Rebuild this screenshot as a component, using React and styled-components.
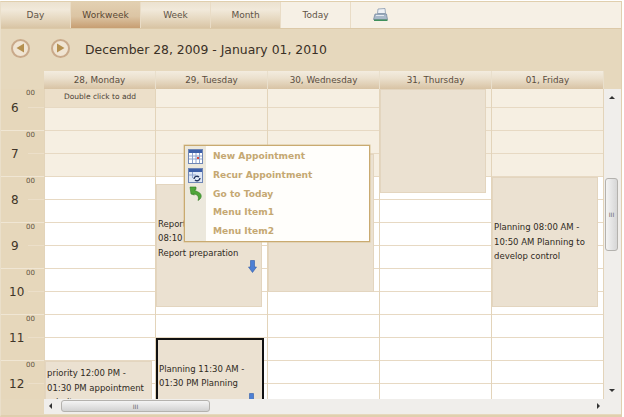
import React from "react";
import styled, { createGlobalStyle } from "styled-components";

const days = ["28, Monday", "29, Tuesday", "30, Wednesday", "31, Thursday", "01, Friday"];
const hours = [6, 7, 8, 9, 10, 11, 12];
const slots = Array.from({ length: 17 }, (_, i) => i);
const font = `"DejaVu Sans", Verdana, sans-serif`;

const GlobalStyle = createGlobalStyle`
  html, body {
    margin: 0;
    background: #fff;
    overflow: hidden;
  }
`;

const Frame = styled.div`
  box-sizing: border-box;
  width: 622px;
  height: 416px;
  margin-top: 1px;
  display: flex;
  flex-direction: column;
  background: #e6d8bd;
  border: 1px solid #e0cfae;
  border-left: 1px solid #eadfca;
  border-bottom-width: 2px;
  font-family: ${font};
  color: #3c3327;
  overflow: hidden;
`;

const Toolbar = styled.div`
  display: flex;
  height: 26px;
  flex: none;
  background: #f6f0e5;
  border-bottom: 1px solid #dcc9a8;
`;

const Tab = styled.div`
  box-sizing: border-box;
  width: 70px;
  display: flex;
  align-items: center;
  justify-content: center;
  font-size: 9px;
  color: ${(p) => (p.$active ? "#5a4632" : "#5f5346")};
  border-right: 1px solid #e9dcc6;
  background: ${(p) =>
    p.$active
      ? "linear-gradient(#e3d0b2 0%, #dcc5a4 55%, #c79e72 100%)"
      : p.$plain
      ? "#f6f0e5"
      : "linear-gradient(#ece2d0 0%, #f1e9da 30%, #e6d8c0 65%, #d8c4a4 100%)"};
`;

const PrintSlot = styled.div`
  width: 29px;
  margin-left: 22px;
  display: flex;
  align-items: center;
`;

const NavBar = styled.div`
  height: 42px;
  flex: none;
  display: flex;
  align-items: center;
  padding-left: 10px;
`;

const NavButton = styled.div`
  box-sizing: border-box;
  width: 19px;
  height: 19px;
  margin-right: ${(p) => p.$gap}px;
  margin-bottom: 4px;
  border-radius: 50%;
  border: 2px solid #c9a98a;
  background: #f0e4d2;
  display: flex;
  align-items: center;
  justify-content: center;
`;

const Title = styled.div`
  font-size: 12.4px;
  padding-bottom: 2px;
  color: #3a3026;
  white-space: nowrap;
`;

const HeaderRow = styled.div`
  display: flex;
  height: 18px;
  flex: none;
  padding-left: 43px;
`;

const DayHead = styled.div`
  box-sizing: border-box;
  width: 112px;
  display: flex;
  align-items: center;
  justify-content: center;
  font-size: 8.8px;
  color: #5a4d3e;
  border-right: 1px solid #e9dfcc;
  background: linear-gradient(#f3ecdf 0%, #ebe0cd 40%, #d8c3a4 100%);
`;

const Main = styled.div`
  position: relative;
  display: flex;
  height: 310px;
  flex: none;
  overflow: hidden;
`;

const Gutter = styled.div`
  width: 43px;
  flex: none;
  display: flex;
  flex-direction: column;
`;

const HourBlock = styled.div`
  box-sizing: border-box;
  position: relative;
  height: ${(p) => (p.$first ? 42 : 46)}px;
  flex: none;
  padding: ${(p) => (p.$first ? 12 : 16)}px 0 0 ${(p) => (p.$wide ? 8 : 10)}px;
  font-size: 12px;
  color: #3f3528;
  background: #e6d7bb;
  border-bottom: 1px solid #f0e6d4;

  &::after {
    content: "";
    position: absolute;
    right: 0;
    bottom: 22px;
    width: 16px;
    height: 1px;
    background: #ecdfc9;
  }
`;

const Minutes = styled.span`
  position: absolute;
  top: 0;
  right: 9px;
  font-size: 7px;
  color: #5f5240;
`;

const DayColumn = styled.div`
  position: relative;
  box-sizing: border-box;
  width: 112px;
  flex: none;
  border-right: 1px solid #e3d4ba;
  border-left: ${(p) => (p.$first ? "1px solid #e3d4ba" : "0")};
`;

const Slot = styled.div`
  box-sizing: border-box;
  height: ${(p) => (p.$first ? 19 : 23)}px;
  border-bottom: 1px solid #e7d9c3;
  background: ${(p) => (p.$hint ? "#ecdfc9" : p.$off ? "#f6efe2" : "#fff")};
  font-size: 7.5px;
  text-align: center;
  line-height: 15px;
  color: #4b4034;
`;

const EventBox = styled.div`
  box-sizing: border-box;
  position: absolute;
  left: 0;
  top: ${(p) => p.$top}px;
  width: ${(p) => p.$width || 106}px;
  height: ${(p) => p.$height}px;
  padding: 0 0 ${(p) => p.$lift || 0}px 1px;
  display: flex;
  align-items: center;
  background: #ebe1d1;
  border: ${(p) => (p.$selected ? "2px solid #111" : "1px solid #e3d5bf")};
  font-size: 8.5px;
  line-height: 14.5px;
  color: #2f2a22;
`;

const ArrowSlot = styled.div`
  position: absolute;
  right: ${(p) => p.$right}px;
  top: ${(p) => p.$top}px;
  line-height: 0;
`;

const VScroll = styled.div`
  position: relative;
  width: 17px;
  flex: none;
  background: #f0eeeb;
`;

const ScrollArrow = styled.div`
  position: absolute;
  width: 0;
  height: 0;
  left: ${(p) => p.$left}px;
  top: ${(p) => p.$top}px;
  border: 3px solid transparent;
  ${(p) => p.$dir === "up" && "border-top: 0; border-bottom: 3px solid #333;"}
  ${(p) => p.$dir === "down" && "border-bottom: 0; border-top: 3px solid #333;"}
  ${(p) => p.$dir === "left" && "border-left: 0; border-right: 3px solid #333;"}
  ${(p) => p.$dir === "right" && "border-right: 0; border-left: 3px solid #333;"}
`;

const VThumb = styled.div`
  position: absolute;
  left: 1px;
  top: 89px;
  box-sizing: border-box;
  width: 13px;
  height: 73px;
  border: 1px solid #b4b2ae;
  border-radius: 3px;
  background: linear-gradient(90deg, #f4f4f4, #d6d6d6);
  display: flex;
  align-items: center;
  justify-content: center;
  font-size: 6px;
  color: #666;
`;

const HScrollRow = styled.div`
  display: flex;
  height: 16px;
  flex: none;
  padding-left: 43px;
`;

const HTrack = styled.div`
  position: relative;
  flex: 1;
  height: 15px;
  background: #f0eeeb;
`;

const HThumb = styled.div`
  position: absolute;
  left: 17px;
  top: 1px;
  box-sizing: border-box;
  width: 149px;
  height: 12px;
  border: 1px solid #b4b2ae;
  border-radius: 3px;
  background: linear-gradient(#f4f4f4, #d2d2d2);
  display: flex;
  align-items: center;
  justify-content: center;
  font-size: 6px;
  color: #666;
`;

const Menu = styled.div`
  position: absolute;
  left: 183px;
  top: 56px;
  z-index: 5;
  box-sizing: border-box;
  width: 186px;
  height: 97px;
  display: flex;
  flex-direction: column;
  padding-top: 1px;
  background: linear-gradient(90deg, #ece8dc 21px, #fffefb 21px);
  border: 1px solid #c9aa70;
  box-shadow: 0 0 0 0.5px #d9c296;
`;

const MenuItem = styled.div`
  height: 18.7px;
  display: flex;
  align-items: center;
  font-size: 9.1px;
  font-weight: 700;
  color: #c5a872;
`;

const MenuIcon = styled.div`
  width: 21px;
  margin-right: 7px;
  flex: none;
  display: flex;
  justify-content: center;
  line-height: 0;
`;

const CalendarIcon = () => (
  <svg width="15" height="15" viewBox="0 0 15 15">
    <rect x="0.5" y="0.5" width="14" height="14" fill="#fff" stroke="#6f86b5" />
    <rect x="1" y="1" width="13" height="3" fill="#3d5fa8" />
    <path d="M1 7h13M1 10h13M4.500 4v10M8 4v10M11.500 4v10" stroke="#8ea3cc" />
    <rect x="9" y="8" width="2" height="2" fill="#d8453c" />
  </svg>
);

const RecurIcon = () => (
  <svg width="15" height="15" viewBox="0 0 15 15">
    <rect x="0.5" y="0.5" width="14" height="14" fill="#dfe7f5" stroke="#6f86b5" />
    <rect x="1" y="1" width="13" height="3" fill="#3d5fa8" />
    <path d="M1 7h7M4.500 4v6" stroke="#8ea3cc" />
    <path d="M6 11a3 3 0 0 1 5-2M12 10a3 3 0 0 1-5 2" fill="none" stroke="#24365f" strokeWidth="1.4" />
  </svg>
);

const TodayIcon = () => (
  <svg width="14" height="15" viewBox="0 0 14 15">
    <path d="M1 1h6v2.500L5 4l5 2.500c2.500 1.500 3 4.500 1 6.500l-2 1.500C10 12 9.500 9.500 7 8.500L4 7.500 5.500 9 2 8z" fill="#4fa63a" stroke="#2f7a22" strokeWidth="0.6" />
  </svg>
);

const PrinterIcon = () => (
  <svg width="15" height="14" viewBox="0 0 15 14">
    <path d="M5 1l7-0.500 0.500 5h-8z" fill="#eef1f5" stroke="#7b8ea6" strokeWidth="0.7" />
    <path d="M2 6h11.500l1 5.500H0.500z" fill="#a9b8c9" stroke="#71849b" strokeWidth="0.7" />
    <path d="M1 11.500h13.500V13H1z" fill="#3f8f5b" />
    <path d="M3 7.500h8" stroke="#e4eaf0" />
  </svg>
);

const DownArrow = () => (
  <svg width="9" height="13" viewBox="0 0 9 13">
    <path d="M2.500 0.500h4v6.500h2L4.500 12.500 0.500 7h2z" fill="#4d7fd4" stroke="#2f5aa8" strokeWidth="0.6" />
  </svg>
);

const NavTriangle = ({ left }) => (
  <svg width="9" height="10" viewBox="0 0 9 10">
    <path d={left ? "M8 0.500v9L0.500 5z" : "M1 0.500v9L8.500 5z"} fill="#b5904f" />
  </svg>
);

export default function App() {
  return (
    <>
      <GlobalStyle />
      <Frame>
        <Toolbar>
          <Tab>Day</Tab>
          <Tab $active>Workweek</Tab>
          <Tab>Week</Tab>
          <Tab>Month</Tab>
          <Tab $plain>Today</Tab>
          <PrintSlot>
            <PrinterIcon />
          </PrintSlot>
        </Toolbar>
        <NavBar>
          <NavButton $gap={21}>
            <NavTriangle left />
          </NavButton>
          <NavButton $gap={15}>
            <NavTriangle />
          </NavButton>
          <Title>December 28, 2009 - January 01, 2010</Title>
        </NavBar>
        <HeaderRow>
          {days.map((d) => (
            <DayHead key={d}>{d}</DayHead>
          ))}
        </HeaderRow>
        <Main>
          <Gutter>
            {hours.map((h, i) => (
              <HourBlock key={h} $first={i === 0} $wide={h > 9}>
                <Minutes>00</Minutes>
                {h}
              </HourBlock>
            ))}
          </Gutter>
          {days.map((d, c) => (
            <DayColumn key={d} $first={c === 0}>
              {slots.map((s) => (
                <Slot key={s} $first={s === 0} $off={s < 4} $hint={c === 0 && s === 0}>
                  {c === 0 && s === 0 ? "Double click to add" : ""}
                </Slot>
              ))}
              {c === 0 && (
                <EventBox $top={272} $height={54} $width={107}>
                  priority 12:00 PM - 01:30 PM appointment priority
                </EventBox>
              )}
              {c === 1 && (
                <>
                  <EventBox $top={95} $height={123} $lift={14}>
                    Report preparation 08:10 AM - 10:50 AM Report preparation
                    <ArrowSlot $top={75} $right={4}>
                      <DownArrow />
                    </ArrowSlot>
                  </EventBox>
                  <EventBox $top={249} $height={76} $width={108} $selected>
                    Planning 11:30 AM - 01:30 PM Planning
                    <ArrowSlot $top={53} $right={6}>
                      <DownArrow />
                    </ArrowSlot>
                  </EventBox>
                </>
              )}
              {c === 2 && <EventBox $top={65} $height={138} />}
              {c === 3 && <EventBox $top={0} $height={104} />}
              {c === 4 && (
                <EventBox $top={88} $height={130}>
                  Planning 08:00 AM - 10:50 AM Planning to develop control
                </EventBox>
              )}
            </DayColumn>
          ))}
          <VScroll>
            <ScrollArrow $dir="up" $left={5} $top={7} />
            <VThumb>III</VThumb>
            <ScrollArrow $dir="down" $left={5} $top={300} />
          </VScroll>
          <Menu>
            <MenuItem>
              <MenuIcon>
                <CalendarIcon />
              </MenuIcon>
              New Appointment
            </MenuItem>
            <MenuItem>
              <MenuIcon>
                <RecurIcon />
              </MenuIcon>
              Recur Appointment
            </MenuItem>
            <MenuItem>
              <MenuIcon>
                <TodayIcon />
              </MenuIcon>
              Go to Today
            </MenuItem>
            <MenuItem>
              <MenuIcon />
              Menu Item1
            </MenuItem>
            <MenuItem>
              <MenuIcon />
              Menu Item2
            </MenuItem>
          </Menu>
        </Main>
        <HScrollRow>
          <HTrack>
            <ScrollArrow $dir="left" $left={5} $top={4} />
            <HThumb>III</HThumb>
            <ScrollArrow $dir="right" $left={553} $top={4} />
          </HTrack>
        </HScrollRow>
      </Frame>
    </>
  );
}
